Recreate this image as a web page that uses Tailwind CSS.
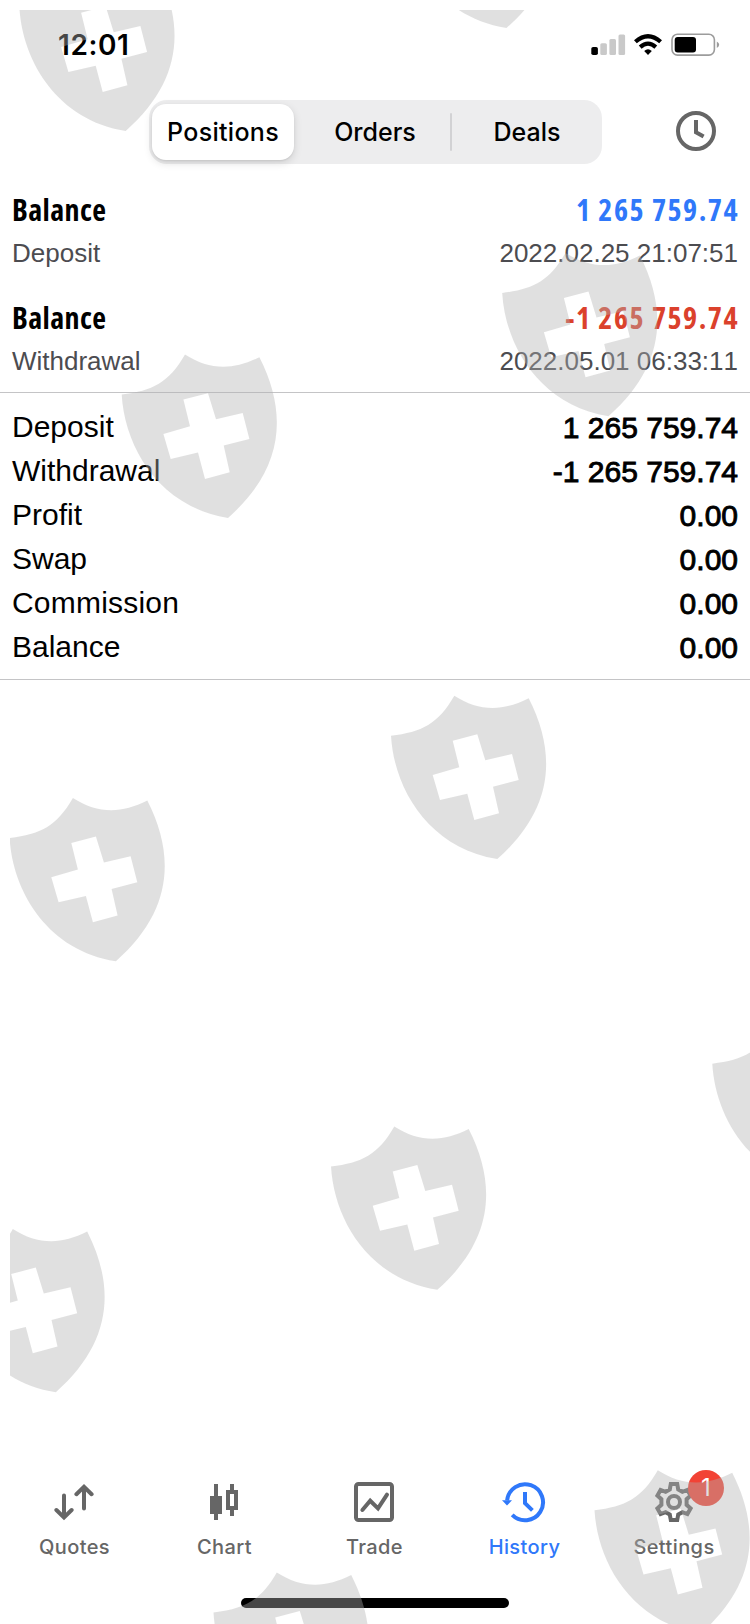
<!DOCTYPE html>
<html lang="en">
<head>
<meta charset="utf-8">
<title>History</title>
<script src="https://cdn.jsdelivr.net/npm/@tailwindcss/browser@4"></script>
</head>
<body class="bg-white">
<div class="relative flex h-[1624px] w-[750px] flex-col overflow-hidden bg-white font-['Inter',sans-serif] text-black">

  <!-- Status bar -->
  <header class="flex h-[100px] items-start justify-between pt-7 pl-[58px] pr-[30px]">
    <div class="text-[28px] leading-[34px] font-semibold tracking-[0.6px]">12:01</div>
    <svg class="mt-[5px]" width="130" height="24" viewBox="590 33 130 24">
      <rect x="591.3" y="47" width="6.6" height="8" rx="1.8"/>
      <g fill="#c9c9c9">
        <rect x="600.3" y="43.3" width="6.6" height="11.7" rx="1.5"/>
        <rect x="609.4" y="39" width="6.6" height="16" rx="1.5"/>
        <rect x="618.5" y="34.5" width="6.6" height="20.5" rx="1.5"/>
      </g>
      <g fill="none" stroke="#000" stroke-width="4.2">
        <path d="M635.4 41.8Q648 30.6 660.6 41.8"/>
        <path d="M640.2 47.1Q648 40.2 655.8 47.1"/>
      </g>
      <path d="M644.2 51.1Q648 47.6 651.8 51.1L648 54.9Z"/>
      <rect x="672" y="34.3" width="42.4" height="20.8" rx="5.5" fill="none" stroke="#9c9c9c" stroke-width="1.6"/>
      <rect x="674.7" y="37" width="21.3" height="15.4" rx="3"/>
      <path d="M716.8 41.5Q719.2 42.7 719.2 44.7T716.8 48Z" fill="#9c9c9c"/>
    </svg>
  </header>

  <!-- Segmented control -->
  <div class="flex h-[84px] items-start justify-between pl-[149px] pr-[34px]">
    <div class="flex h-16 w-[453px] items-center rounded-[18px] bg-[#ededee] pr-1 pl-[3px] text-center text-[25px] leading-[56px] font-medium">
      <div class="h-14 w-[142px] rounded-[14px] bg-white tracking-[0.3px] shadow-[0_3px_8px_rgba(0,0,0,0.13),0_1px_2px_rgba(0,0,0,0.08)]">Positions</div>
      <div class="w-[156px] pl-1.5">Orders</div>
      <div class="h-[38px] w-0.5 rounded bg-[#d2d2d4]"></div>
      <div class="flex-1 pl-1">Deals</div>
    </div>
    <svg class="mt-[11px]" width="40" height="40" viewBox="0 0 40 40" fill="none" stroke="#666">
      <circle cx="20" cy="20" r="18" stroke-width="4"/>
      <path d="M20 9V21.3L27.6 25.6" stroke-width="4"/>
    </svg>
  </div>

  <!-- Operations -->
  <section class="flex h-[209px] flex-col gap-[30px] border-b border-[#c4c4c6] px-3 pt-1.5 [font-kerning:none]">
    <div class="flex flex-col gap-2">
      <div class="flex justify-between font-['Open_Sans',sans-serif] text-[30px] leading-10 font-bold font-stretch-75%">
        <span class="tracking-[0.4px]">Balance</span>
        <span class="-mr-px tracking-[1.5px] text-[#2f78fa]">1 265 759.74</span>
      </div>
      <div class="flex justify-between font-['Liberation_Sans',sans-serif] text-[26px] leading-[30px] text-[#4c4c50]">
        <span>Deposit</span><span>2022.02.25 21:07:51</span>
      </div>
    </div>
    <div class="flex flex-col gap-2">
      <div class="flex justify-between font-['Open_Sans',sans-serif] text-[30px] leading-10 font-bold font-stretch-75%">
        <span class="tracking-[0.4px]">Balance</span>
        <span class="-mr-px tracking-[1.5px] text-[#db412c]">-1 265 759.74</span>
      </div>
      <div class="flex justify-between font-['Liberation_Sans',sans-serif] text-[26px] leading-[30px] text-[#4c4c50]">
        <span>Withdrawal</span><span>2022.05.01 06:33:11</span>
      </div>
    </div>
  </section>

  <!-- Summary -->
  <section class="flex h-[287px] flex-col border-b border-[#c4c4c6] px-3 pt-3 font-['Liberation_Sans',sans-serif] text-[30px] leading-[44px] [font-kerning:none]">
    <div class="flex justify-between"><span>Deposit</span><span class="pt-px [-webkit-text-stroke:0.9px_#000]">1 265 759.74</span></div>
    <div class="-mt-px flex justify-between"><span>Withdrawal</span><span class="pt-px [-webkit-text-stroke:0.9px_#000]">-1 265 759.74</span></div>
    <div class="-mt-px flex justify-between"><span>Profit</span><span class="pt-px [-webkit-text-stroke:0.9px_#000]">0.00</span></div>
    <div class="-mt-px flex justify-between"><span>Swap</span><span class="pt-px [-webkit-text-stroke:0.9px_#000]">0.00</span></div>
    <div class="-mt-px flex justify-between"><span class="tracking-[0.2px]">Commission</span><span class="pt-px [-webkit-text-stroke:0.9px_#000]">0.00</span></div>
    <div class="-mt-px flex justify-between"><span>Balance</span><span class="pt-px [-webkit-text-stroke:0.9px_#000]">0.00</span></div>
  </section>

  <div class="flex-1"></div>

  <!-- Tab bar -->
  <nav class="-ml-px grid h-[116px] w-[750px] grid-cols-5 text-center text-xl leading-6 font-[450] tracking-[0.4px] text-[#666]">
    <div class="flex flex-col items-center gap-[13px]">
      <svg width="40" height="40" viewBox="0 0 40 40" fill="none" stroke="#666" stroke-width="4" stroke-linecap="round">
        <path d="M10 13.4V34M2.4 28L10 35.4L17.6 28"/>
        <path d="M30 26.6V6M22.4 12.2L30 4.8L37.6 12.2"/>
      </svg>
      <span class="pl-px">Quotes</span>
    </div>
    <div class="flex flex-col items-center gap-[13px]">
      <svg width="40" height="40" viewBox="0 0 40 40" fill="#666">
        <path d="M10 2h4v12h4v18h-4v6h-4v-6H6V14h4z"/>
        <path d="M26 2h4v6h4v20h-4v6h-4v-6h-4V8h4zM26 12v12h4V12z" fill-rule="evenodd"/>
      </svg>
      <span class="pl-px">Chart</span>
    </div>
    <div class="flex flex-col items-center gap-[13px]">
      <svg width="40" height="40" viewBox="0 0 40 40" fill="none" stroke="#666" stroke-width="4">
        <rect x="2" y="2" width="36" height="36" rx="2.5"/>
        <path d="M8.4 28L16.2 18.8L24 26.4L33 12.6" stroke-linecap="round"/>
      </svg>
      <span class="pl-px">Trade</span>
    </div>
    <div class="flex flex-col items-center gap-[13px] text-[#2f78fa]">
      <svg class="overflow-visible" width="40" height="40" viewBox="0 0 40 40" fill="none" stroke="#2f78fa" stroke-width="4">
        <path d="M3.1 18.5A18 18 0 1 1 8.2 32.9"/>
        <path d="M-2 18.3H8L3 23.6Z" fill="#2f78fa" stroke="none"/>
        <path d="M21 10V21.2L28.4 28.4"/>
      </svg>
      <span class="pl-px">History</span>
    </div>
    <div class="relative flex flex-col items-center gap-[13px]">
      <svg width="40" height="40" viewBox="0 0 40 40" fill="none" stroke="#666" stroke-width="4">
        <path d="M16.8 2H23.2L24.2 7.4L28.4 9.8L33.4 7.9L36.6 13.6L32.6 17.2V22.8L36.6 26.4L33.4 32.1L28.4 30.2L24.2 32.6L23.2 38H16.8L15.8 32.6L11.6 30.2L6.6 32.1L3.4 26.4L7.4 22.8V17.2L3.4 13.6L6.6 7.9L11.6 9.8L15.8 7.4Z"/>
        <circle cx="20" cy="20" r="6"/>
      </svg>
      <span>Settings</span>
      <span class="absolute top-[-12px] left-[89px] size-9 rounded-full bg-[#f24335] text-2xl leading-9 font-normal tracking-normal text-white">1</span>
    </div>
  </nav>
  <div class="h-[26px] pl-[241px]"><div class="h-2.5 w-[268px] rounded-full bg-black"></div></div>

  <!-- Watermark -->
  <svg class="pointer-events-none absolute inset-0" width="750" height="1624" viewBox="0 0 750 1624">
    <defs>
      <path id="s" fill-rule="evenodd" d="M11 55.7C42 52 58 44 74.3 15.7C98 31 122 32 148.7 18.3C177.5 75 173 130 117.3 179C48 168 14 108 11 55.7ZM72.7 60.7L97.3 54.3L105.3 80.3L132 74L138.7 100L113 106.7L119 133.3L94.3 140L87.3 113.7L60 120L52.7 95L79.3 87.3Z"/>
      <clipPath id="c"><rect x="10" y="10" width="740" height="1614"/></clipPath>
    </defs>
    <g fill="#b1b1b1" fill-opacity=".4" clip-path="url(#c)">
      <use href="#s" x="8.4" y="-48"/>
      <use href="#s" x="389.2" y="-151"/>
      <use href="#s" x="491.2" y="237.2"/>
      <use href="#s" x="110.7" y="338.9"/>
      <use href="#s" x="380" y="680"/>
      <use href="#s" x="-1.4" y="782.3"/>
      <use href="#s" x="701.3" y="1008"/>
      <use href="#s" x="320" y="1110.8"/>
      <use href="#s" x="-61.5" y="1213.3"/>
      <use href="#s" x="583.5" y="1454.5"/>
      <use href="#s" x="202.5" y="1556.8"/>
    </g>
  </svg>
</div>
</body>
</html>
